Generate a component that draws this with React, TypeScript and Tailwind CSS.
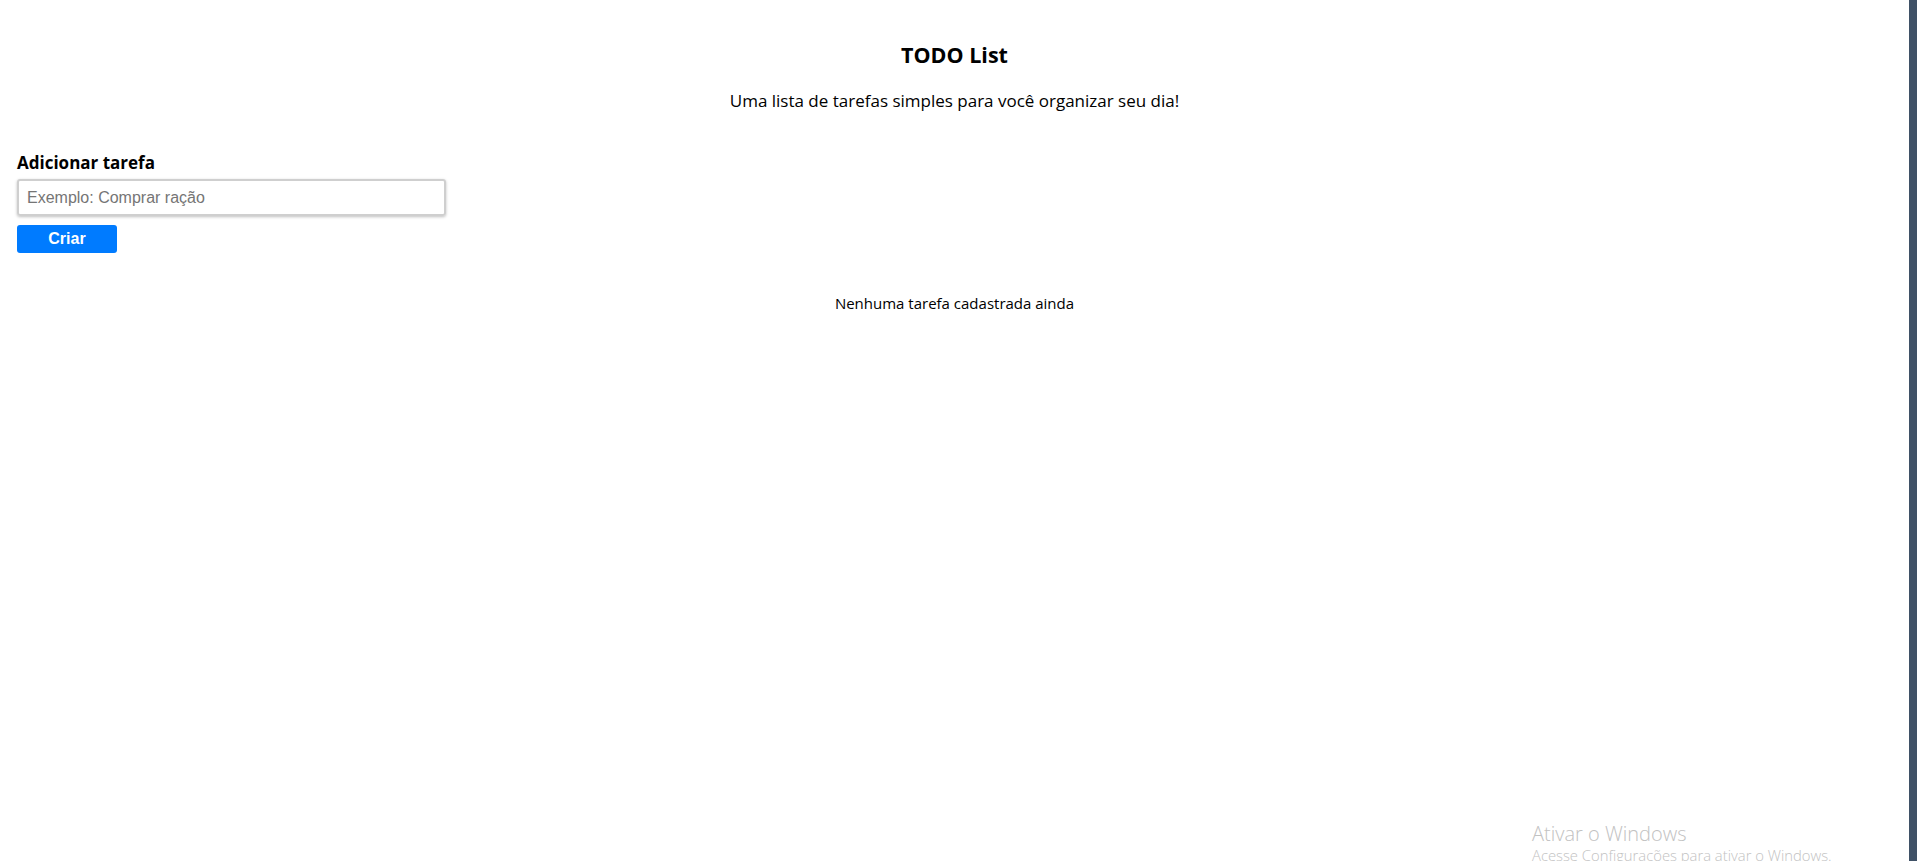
import { useState } from "react";

export default function App() {
  const [task, setTask] = useState("");

  return (
    <div className="relative flex h-[861px] w-full overflow-hidden bg-white" style={{ fontFamily: "'Open Sans', 'Noto Sans', sans-serif" }}>
      <main className="flex-1 px-[17px] text-black">
        {/* Header */}
        <header className="pt-[39px] text-center">
          <h1 className="text-[21.5px] font-bold leading-[32px]">TODO List</h1>
          <p className="mt-[18px] text-[17px] leading-[24px]">Uma lista de tarefas simples para você organizar seu dia!</p>
        </header>

        {/* Form */}
        <form className="mt-[38px] flex flex-col" onSubmit={e => e.preventDefault()}>
          <label className="text-[17px] font-bold leading-[23px]">Adicionar tarefa</label>
          <input
            value={task}
            onChange={e => setTask(e.target.value)}
            placeholder="Exemplo: Comprar ração"
            className="mt-[5px] h-[37px] w-[429px] rounded-[3px] border-2 border-[#cfcfcf] px-[8px] text-[16px] shadow-[0_1px_3px_rgba(0,0,0,0.25)] outline-none placeholder:text-[#757575]"
            style={{ fontFamily: "'Liberation Sans', Arial, sans-serif" }}
          />
          <button
            type="submit"
            className="mt-[9px] h-[28px] w-[100px] rounded-[3px] bg-[#007bff] text-[16px] font-bold text-white"
            style={{ fontFamily: "'Liberation Sans', Arial, sans-serif" }}
          >
            Criar
          </button>
        </form>

        {/* Empty state */}
        <p className="mt-[40px] text-center text-[15px] leading-[20px]">Nenhuma tarefa cadastrada ainda</p>
      </main>

      {/* Right edge */}
      <div className="flex w-[12px] shrink-0">
        <div className="w-[8px] bg-[#3f5166]" />
        <div className="flex-1 bg-white" />
      </div>

      {/* Windows activation watermark */}
      <div className="pointer-events-none absolute left-[1532px] top-[821px] text-[#c2c2c2]">
        <div className="text-[20px] font-light leading-[25px]">Ativar o Windows</div>
        <div className="text-[14.8px] font-light leading-[18px]">Acesse Configurações para ativar o Windows.</div>
      </div>
    </div>
  );
}
